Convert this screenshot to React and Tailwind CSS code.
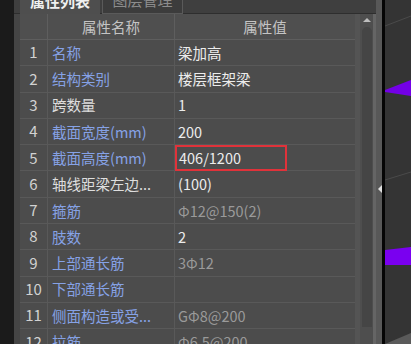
const rows = [
  { n: 1, name: '名称', blue: true, value: '梁加高', dim: false },
  { n: 2, name: '结构类别', blue: true, value: '楼层框架梁', dim: false },
  { n: 3, name: '跨数量', blue: false, value: '1', dim: false },
  { n: 4, name: '截面宽度(mm)', blue: true, value: '200', dim: false },
  { n: 5, name: '截面高度(mm)', blue: true, value: '406/1200', dim: false, boxed: true },
  { n: 6, name: '轴线距梁左边...', blue: false, value: '(100)', dim: false },
  { n: 7, name: '箍筋', blue: true, value: 'Φ12@150(2)', dim: true },
  { n: 8, name: '肢数', blue: true, value: '2', dim: false },
  { n: 9, name: '上部通长筋', blue: true, value: '3Φ12', dim: true },
  { n: 10, name: '下部通长筋', blue: true, value: '', dim: true },
  { n: 11, name: '侧面构造或受...', blue: true, value: 'GΦ8@200', dim: true },
  { n: 12, name: '拉筋', blue: true, value: 'Φ6.5@200', dim: true },
]

const font = { fontFamily: '"Noto Sans CJK SC", "Noto Sans", sans-serif' }

function Row({ r }) {
  return (
    <div className="flex h-[26.3px] shrink-0 border-b border-[#595959]">
      <div className="w-[28px] shrink-0 flex items-center justify-center border-r border-[#595959] text-[15px] text-[#d2d2d2]">
        {r.n}
      </div>
      <div
        className={
          'w-[127px] shrink-0 flex items-center pl-[4px] border-r border-[#595959] text-[14.5px] whitespace-nowrap overflow-hidden ' +
          (r.blue ? 'text-[#86a2e6]' : 'text-[#dedede]')
        }
      >
        {r.name}
      </div>
      <div className="flex-1 flex items-center pl-[3px] text-[14.5px] whitespace-nowrap">
        {r.boxed ? (
          <span className="h-[26px] w-[112px] -ml-[3px] pl-[2px] flex items-center border-2 border-[#e0323a] text-[#ececec]">
            {r.value}
          </span>
        ) : (
          <span className={r.dim ? 'text-[#9a9a9a]' : 'text-[#ececec]'}>{r.value}</span>
        )}
      </div>
    </div>
  )
}

function View3D() {
  return (
    <svg width="26" height="344" viewBox="0 0 26 344" className="block">
      <rect width="26" height="344" fill="#343434" />
      <line x1="0" y1="26" x2="26" y2="16" stroke="#4a4a4a" strokeWidth="1" />
      <line x1="0" y1="180" x2="26" y2="172" stroke="#4a4a4a" strokeWidth="1" />
      <polygon points="0,90 26,80 26,96 0,92" fill="#7300e6" />
      <polygon points="0,250 26,247 26,265 0,265" fill="#7a00f0" />
      <polygon points="0,344 26,333 26,344" fill="#5a5a5a" />
    </svg>
  )
}

export default function App() {
  return (
    <div className="w-[411px] h-[344px] flex overflow-hidden bg-[#1b1b1b]" style={font}>
      <div className="w-[14px] shrink-0 bg-[#1b1b1b]" />
      <div className="w-[362px] shrink-0 flex flex-col bg-[#3f3f3f]">
        <div className="h-[14px] shrink-0 flex pl-[6px] border-b border-[#2e2e2e]">
          <div className="w-[80px] h-[14px] flex items-end justify-center pb-[6px] overflow-hidden bg-[#4e4e4e] text-[15px] leading-[15px] font-bold text-[#f0f0f0]">
            属性列表
          </div>
          <div className="w-[81px] h-[14px] ml-[2px] flex items-end justify-center pb-[6px] overflow-hidden bg-[#3c3c3c] border border-t-0 border-[#5a5a5a] text-[15px] leading-[15px] text-[#8c8c8c]">
            图层管理
          </div>
        </div>
        <div className="flex flex-1 min-h-0 pl-[6px] bg-[#454545]">
          <div className="w-[335px] shrink-0 flex flex-col bg-[#4c4c4c] overflow-hidden">
            <div className="flex h-[26px] shrink-0 border-b border-[#5e5e5e] bg-[#4f4f4f] text-[14.5px] text-[#c4c4c4]">
              <div className="w-[28px] shrink-0 border-r border-[#5e5e5e]" />
              <div className="w-[127px] shrink-0 flex items-center justify-center border-r border-[#5e5e5e]">
                属性名称
              </div>
              <div className="flex-1 flex items-center justify-center">属性值</div>
            </div>
            {rows.map(r => (
              <Row key={r.n} r={r} />
            ))}
          </div>
          <div className="w-[5px] shrink-0 bg-[#545454]" />
          <div className="w-[13px] shrink-0 flex flex-col items-center bg-[#4e4e4e] pt-[4px]">
            <div className="w-0 h-0 border-l-[4px] border-r-[4px] border-b-[4px] border-l-transparent border-r-transparent border-b-[#bdbdbd]" />
            <div className="w-[10px] mt-[5px] h-[300px] rounded-t-[5px] bg-[#454545]" />
          </div>
          <div className="w-[3px] shrink-0 bg-[#656565]" />
        </div>
      </div>
      <div className="w-[6px] shrink-0 flex items-center justify-end bg-[#585858]">
        <div className="w-0 h-0 mt-[33px] border-t-[4px] border-b-[4px] border-r-[4px] border-t-transparent border-b-transparent border-r-[#e0e0e0]" />
      </div>
      <div className="w-[3px] shrink-0 bg-[#050505]" />
      <View3D />
    </div>
  )
}
